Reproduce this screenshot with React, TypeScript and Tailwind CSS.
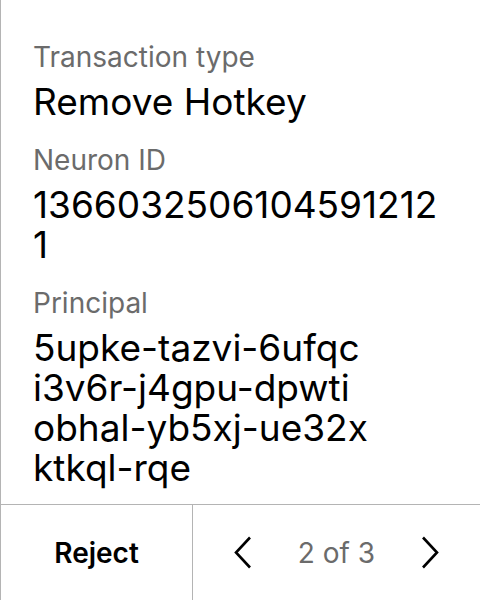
const fields = [
  { label: "Transaction type", lines: ["Remove Hotkey"] },
  { label: "Neuron ID", lines: ["1366032506104591212", "1"] },
  {
    label: "Principal",
    lines: ["5upke-tazvi-6ufqc", "i3v6r-j4gpu-dpwti", "obhal-yb5xj-ue32x", "ktkql-rqe"],
  },
];

function Chevron({ dir }: { dir: "left" | "right" }) {
  return (
    <svg width="18" height="33" viewBox="0 0 18 33" fill="none">
      <path
        d={dir === "left" ? "M16 1.5L2 16.5l14 15" : "M2 1.5l14 15-14 15"}
        stroke="black"
        strokeWidth="2.6"
      />
    </svg>
  );
}

export default function App() {
  return (
    <div
      className="w-[480px] h-[600px] bg-white flex flex-col border-l border-[#b4b4b4] text-black"
      style={{ fontFamily: "Inter, 'Noto Sans', sans-serif" }}
    >
      <div className="flex-1 flex flex-col gap-[22px] pl-[32px] pt-[41px]">
        {fields.map(({ label, lines }) => (
          <div key={label} className="flex flex-col">
            <div className="text-[28px] leading-[32px] text-[#6b6b6b] mb-[9px]">{label}</div>
            {lines.map((l) => (
              <div key={l} className="text-[37px] leading-[40px]">
                {l}
              </div>
            ))}
          </div>
        ))}
      </div>
      <div className="h-[96px] flex border-t border-[#b4b4b4]">
        <div className="w-[192px] flex items-center justify-center border-r border-[#b4b4b4] text-[28px] font-semibold">
          Reject
        </div>
        <div className="flex-1 flex items-center justify-center">
          <Chevron dir="left" />
          <span className="text-[28px] text-[#6b6b6b] mx-[46px]">2 of 3</span>
          <Chevron dir="right" />
        </div>
      </div>
    </div>
  );
}
